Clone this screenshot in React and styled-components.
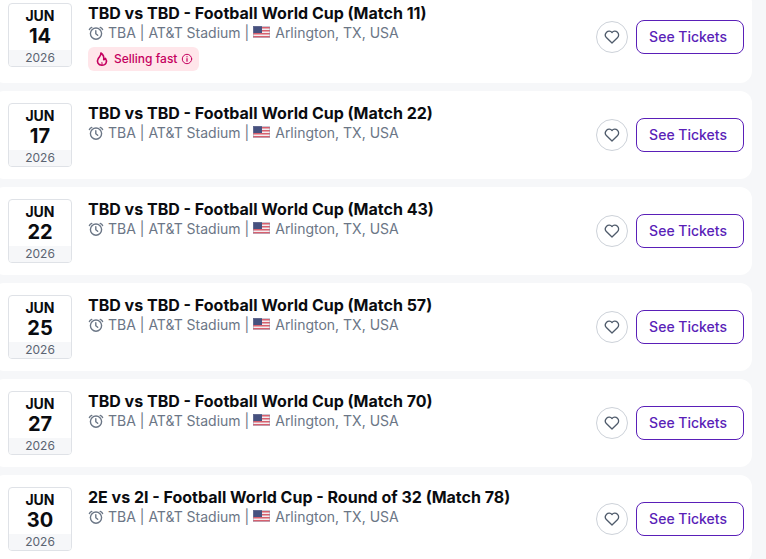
import React from "react";
import styled, { createGlobalStyle } from "styled-components";

const GlobalStyle = createGlobalStyle`
  * {
    box-sizing: border-box;
  }

  body {
    margin: 0;
    background: #f6f7f9;
    font-family: Inter, "Liberation Sans", sans-serif;
  }
`

// the list is shown slightly scrolled, so its first card starts above the window
const StyledPage = styled.main`
  height: 100vh;
  overflow: hidden;
  padding-right: 14px;
`

const StyledList = styled.ul`
  display: flex;
  flex-direction: column;
  gap: 8px;
  margin: -9px 0 0 -8px;
  padding: 0;
  list-style: none;
`

const StyledCard = styled.li`
  display: flex;
  align-items: center;
  gap: 16px;
  padding: 12px 8px 12px 16px;
  border-radius: 12px;
  background: #fff;
`

const DateBox = styled.time`
  display: flex;
  flex-direction: column;
  flex-shrink: 0;
  align-self: flex-start;
  width: 64px;
  height: 64px;
  border: 1px solid #dfe2e7;
  border-radius: 4px;
  overflow: hidden;
  text-align: center;
  color: #0a0c10;
`

const Month = styled.span`
  padding-top: 2px;
  font-size: 14px;
  font-weight: 700;
  line-height: 20px;
`

const Day = styled.span`
  font-size: 20px;
  font-weight: 700;
  line-height: 20px;
`

const Year = styled.span`
  margin-top: auto;
  background: #f6f7f9;
  color: #5b6472;
  font-size: 12px;
  line-height: 16px;
`

const Info = styled.div`
  display: flex;
  flex-direction: column;
  align-items: flex-start;
  align-self: flex-start;
  flex: 1;
  min-width: 0;
`

const Title = styled.h3`
  margin: 0;
  color: #0a0c10;
  font-size: 16px;
  font-weight: 700;
  line-height: 20px;
`

const Venue = styled.p`
  display: flex;
  align-items: center;
  gap: 4px;
  margin: 0;
  color: #6b7686;
  font-size: 14px;
  line-height: 20px;

  svg {
    flex-shrink: 0;
  }
`

const Badge = styled.span`
  display: flex;
  align-items: center;
  gap: 4px;
  height: 24px;
  margin-top: 4px;
  padding: 0 6px 1px;
  border-radius: 6px;
  background: #ffe6ea;
  color: #c5005f;
  font-size: 12px;
  font-weight: 500;
  line-height: 16px;
`

const Actions = styled.div`
  display: flex;
  align-items: center;
  gap: 8px;
  flex-shrink: 0;
`

const HeartButton = styled.button`
  display: flex;
  align-items: center;
  justify-content: center;
  width: 32px;
  height: 32px;
  padding: 0;
  border: 1px solid #cdd2d9;
  border-radius: 50%;
  background: #fff;
  color: #4f5b6b;
  cursor: pointer;
`

const TicketsButton = styled.button`
  height: 34px;
  padding: 0 16px 0 12px;
  border: 1px solid #5a1fb8;
  border-radius: 8px;
  background: #fff;
  color: #5a1fb8;
  font-family: inherit;
  font-size: 14px;
  font-weight: 500;
  line-height: 20px;
  cursor: pointer;
`

const ClockIcon = () => (
  <svg width="16" height="16" viewBox="0 0 16 16" fill="none" stroke="currentColor" strokeWidth="1.4" strokeLinecap="round" strokeLinejoin="round" aria-hidden="true">
    <circle cx="8" cy="8.6" r="5.6" />
    <path d="M7.800 5.800v2.900l1.900 1.500M1.400 4.600C1.800 3.500 2.700 2.700 3.800 2.400M14.600 4.600c-.4-1.100-1.300-1.900-2.400-2.200" />
  </svg>
)

const FlameIcon = () => (
  <svg width="16" height="16" viewBox="0 0 16 16" fill="none" stroke="currentColor" strokeWidth="1.6" strokeLinecap="round" strokeLinejoin="round" aria-hidden="true">
    <path d="M6.900 2C7.300 4.700 5.300 5.900 4.200 7.700 2.300 10.900 4.200 14.300 7.900 14.300c4.200 0 5.700-3.900 3.600-6.900-.4.800-1 1.200-1.800 1.300C10.200 6 9 3.500 6.900 2Z" />
    <path d="M7.900 11.600c-1 1-.9 2.200 0 2.200s1-1.200 0-2.200Z" strokeWidth="0.6" />
  </svg>
)

const InfoIcon = () => (
  <svg width="12" height="12" viewBox="0 0 12 12" fill="none" stroke="currentColor" strokeLinecap="round" aria-hidden="true">
    <circle cx="6" cy="6" r="4.700" />
    <path d="M6 5.600v2.600M6 3.700v.1" strokeWidth="1.200" />
  </svg>
)

const HeartIcon = () => (
  <svg width="16" height="16" viewBox="0 0 16 16" fill="none" stroke="currentColor" strokeWidth="1.3" strokeLinejoin="round" aria-hidden="true">
    <path d="M8 3.600C6.700 1.900 4.200 1.700 2.600 3.200 .9 4.900 1 7.200 2.600 8.800L8 14l5.400-5.200c1.600-1.600 1.700-3.900 0-5.600C11.800 1.700 9.300 1.900 8 3.600Z" />
  </svg>
)

const FlagIcon = () => (
  <svg width="18" height="14" viewBox="0 0 18 14" role="img" aria-label="United States">
    <rect width="17" height="12" fill="#f3edf0" />
    {[1, 4, 7, 10].map((y) => (
      <rect key={y} y={y} width="17" height="1.5" fill="#d8606e" />
    ))}
    <rect width="9" height="7" fill="#46517f" />
    <rect x="0.5" y="0.5" width="16" height="11" fill="none" stroke="#8b8fa8" strokeOpacity="0.4" />
  </svg>
)

const EVENTS = [
  {month: "JUN", day: 14, title: "TBD vs TBD - Football World Cup (Match 11)", sellingFast: true},
  {month: "JUN", day: 17, title: "TBD vs TBD - Football World Cup (Match 22)"},
  {month: "JUN", day: 22, title: "TBD vs TBD - Football World Cup (Match 43)"},
  {month: "JUN", day: 25, title: "TBD vs TBD - Football World Cup (Match 57)"},
  {month: "JUN", day: 27, title: "TBD vs TBD - Football World Cup (Match 70)"},
  {month: "JUN", day: 30, title: "2E vs 2I - Football World Cup - Round of 32 (Match 78)"},
]

const EventCard = ({month, day, title, sellingFast}) => {
  const [isSaved, setIsSaved] = React.useState(false)

  return (
    <StyledCard>
      <DateBox dateTime={`2026-06-${day}`}>
        <Month>{month}</Month>
        <Day>{day}</Day>
        <Year>2026</Year>
      </DateBox>
      <Info>
        <Title>{title}</Title>
        <Venue>
          <ClockIcon />
          <span>TBA | AT&amp;T Stadium |</span>
          <FlagIcon />
          <span>Arlington, TX, USA</span>
        </Venue>
        {sellingFast && (
          <Badge>
            <FlameIcon />
            Selling fast
            <InfoIcon />
          </Badge>
        )}
      </Info>
      <Actions>
        <HeartButton aria-label="Save event" aria-pressed={isSaved} onClick={() => setIsSaved(!isSaved)}>
          <HeartIcon />
        </HeartButton>
        <TicketsButton>See Tickets</TicketsButton>
      </Actions>
    </StyledCard>
  )
}

const App = () => (
  <StyledPage>
    <GlobalStyle />
    <StyledList>
      {EVENTS.map((event) => (
        <EventCard key={event.day} {...event} />
      ))}
    </StyledList>
  </StyledPage>
)

export default App
